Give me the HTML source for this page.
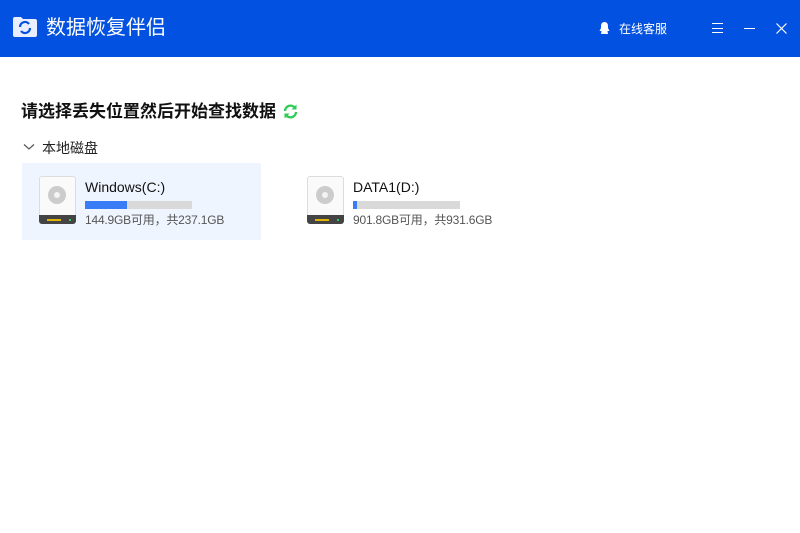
<!DOCTYPE html>
<html><head><meta charset="utf-8"><style>
*{margin:0;padding:0;box-sizing:border-box}
body{width:800px;height:533px;background:#fff;font-family:"Liberation Sans","Noto Sans CJK SC",sans-serif;position:relative;overflow:hidden}
.top{position:absolute;left:0;top:0;width:800px;height:57px;background:#0251e0;color:#fff}
.abs{position:absolute}
.drive{position:absolute;width:37px;height:48px}
.bar{position:absolute;height:8px;background:#d9d9d9}
.bar i{display:block;height:8px;background:#3a7cf5}
</style></head><body>
<div class="top">
 <svg class="abs" style="left:12px;top:16px" width="26" height="22" viewBox="0 0 26 22">
  <path d="M1 3 Q1 1 3 1 H9 L11 3 H23 Q25 3 25 5 V19 Q25 21 23 21 H3 Q1 21 1 19 Z" fill="#e8eeff"/>
  <path d="M8 11 A5 5 0 0 1 17 8" stroke="#0251e0" stroke-width="2.2" fill="none"/>
  <path d="M18 12 A5 5 0 0 1 9 15" stroke="#0251e0" stroke-width="2.2" fill="none"/>
 </svg>
 <div class="abs" style="left:46px;top:15px;font-size:20px;line-height:26px">数据恢复伴侣</div>
 <svg class="abs" style="left:599px;top:22px" width="11" height="13" viewBox="0 0 11 13"><path d="M5.5 0C3 0 2 2 2 4V6L0.5 9H2.5L2 12H9L8.5 9H10.5L9 6V4C9 2 8 0 5.5 0Z" fill="#fff"/></svg>
 <div class="abs" style="left:619px;top:21px;font-size:12px;line-height:16px">在线客服</div>
 <div class="abs" style="left:712px;top:23px;width:11px;height:10px;border-top:1px solid #fff;border-bottom:1px solid #fff"></div>
 <div class="abs" style="left:712px;top:28px;width:11px;height:1px;background:#fff"></div>
 <div class="abs" style="left:744px;top:28px;width:11px;height:1px;background:#fff"></div>
 <svg class="abs" style="left:776px;top:23px" width="11" height="11"><path d="M0.5 0.5L10.5 10.5M10.5 0.5L0.5 10.5" stroke="#fff" stroke-width="1.2"/></svg>
</div>
<div class="abs" style="left:21px;top:100px;font-size:17px;font-weight:bold;line-height:24px;color:#111">请选择丢失位置然后开始查找数据</div>
<svg class="abs" style="left:282px;top:103px" width="17" height="17" viewBox="0 0 17 17">
 <path d="M3 8 A5.5 5.5 0 0 1 13 5" stroke="#2ecc55" stroke-width="2.4" fill="none"/><path d="M14.5 1.5V6.5H9.5Z" fill="#2ecc55"/>
 <path d="M14 9 A5.5 5.5 0 0 1 4 12" stroke="#2ecc55" stroke-width="2.4" fill="none"/><path d="M2.5 15.5V10.5H7.5Z" fill="#2ecc55"/>
</svg>
<svg class="abs" style="left:23px;top:143px" width="12" height="8"><path d="M1 1.5L6 6L11 1.5" stroke="#555" stroke-width="1.2" fill="none"/></svg>
<div class="abs" style="left:42px;top:139px;font-size:14px;line-height:18px;color:#222">本地磁盘</div>
<div class="abs" style="left:22px;top:163px;width:239px;height:77px;background:#eff5fe"></div>
<div class="drive" style="left:39px;top:176px">
 <div class="abs" style="left:0;top:0;width:37px;height:40px;background:#fafafa;border:1px solid #ddd;border-radius:3px 3px 0 0"></div>
 <div class="abs" style="left:9px;top:10px;width:18px;height:18px;border-radius:50%;background:#ccc"></div>
 <div class="abs" style="left:15px;top:16px;width:6px;height:6px;border-radius:50%;background:#f4f4f4"></div>
 <div class="abs" style="left:0;top:39px;width:37px;height:9px;background:#444;border-radius:0 0 3px 3px"></div>
 <div class="abs" style="left:8px;top:43px;width:14px;height:2px;background:#e0b400"></div>
 <div class="abs" style="left:30px;top:43px;width:2px;height:2px;background:#2ecc55"></div>
</div>
<div class="abs" style="left:85px;top:178px;font-size:14px;line-height:18px;color:#111">Windows(C:)</div>
<div class="bar" style="left:85px;top:201px;width:107px"><i style="width:42px"></i></div>
<div class="abs" style="left:85px;top:212px;font-size:12px;line-height:16px;color:#555;letter-spacing:-0.2px">144.9GB可用，共237.1GB</div>
<div class="drive" style="left:307px;top:176px">
 <div class="abs" style="left:0;top:0;width:37px;height:40px;background:#fafafa;border:1px solid #ddd;border-radius:3px 3px 0 0"></div>
 <div class="abs" style="left:9px;top:10px;width:18px;height:18px;border-radius:50%;background:#ccc"></div>
 <div class="abs" style="left:15px;top:16px;width:6px;height:6px;border-radius:50%;background:#f4f4f4"></div>
 <div class="abs" style="left:0;top:39px;width:37px;height:9px;background:#444;border-radius:0 0 3px 3px"></div>
 <div class="abs" style="left:8px;top:43px;width:14px;height:2px;background:#e0b400"></div>
 <div class="abs" style="left:30px;top:43px;width:2px;height:2px;background:#2ecc55"></div>
</div>
<div class="abs" style="left:353px;top:178px;font-size:14px;line-height:18px;color:#111">DATA1(D:)</div>
<div class="bar" style="left:353px;top:201px;width:107px"><i style="width:4px"></i></div>
<div class="abs" style="left:353px;top:212px;font-size:12px;line-height:16px;color:#555;letter-spacing:-0.2px">901.8GB可用，共931.6GB</div>
</body></html>
